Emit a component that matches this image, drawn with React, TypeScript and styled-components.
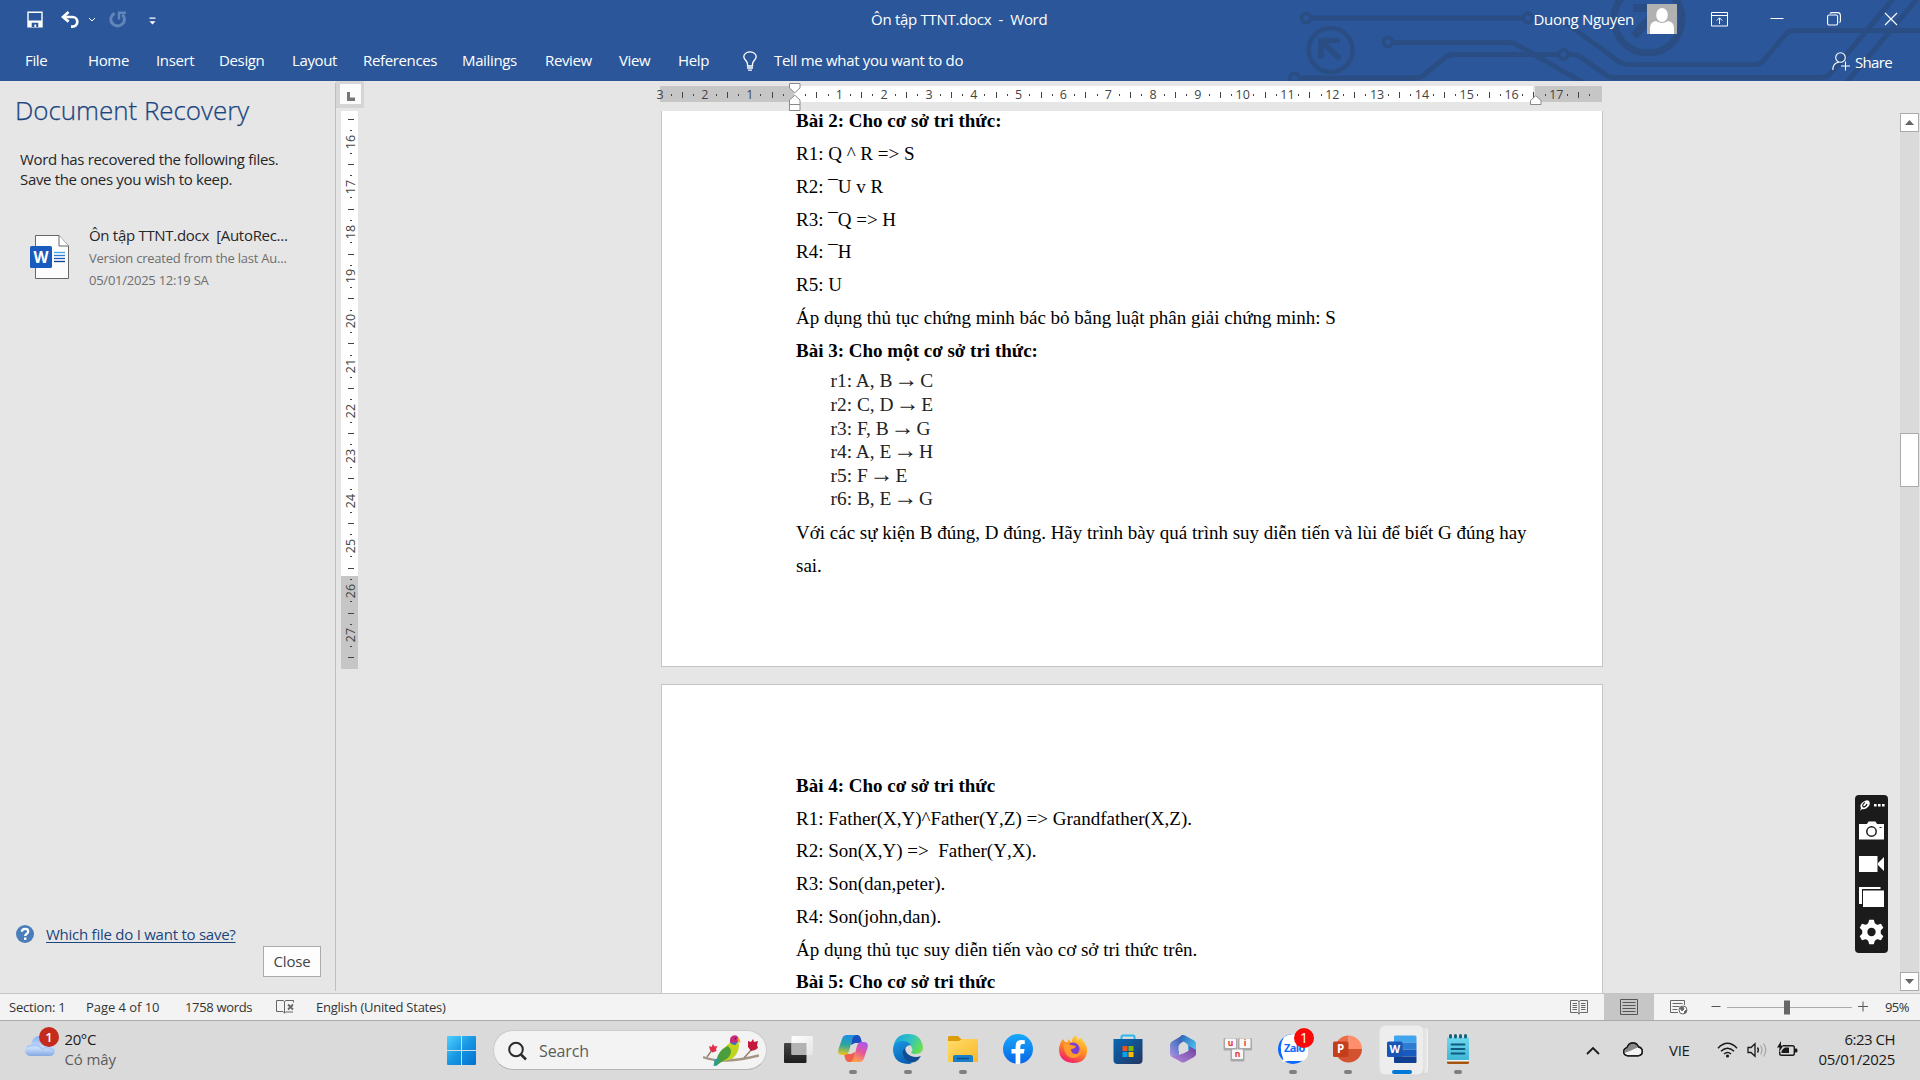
import React from "react";
import styled, { createGlobalStyle, css } from "styled-components";

const ui = `"Open Sans", "Noto Sans", "Liberation Sans", sans-serif`;
const serif = `"Liberation Serif", "DejaVu Serif", serif`;

const GlobalStyle = createGlobalStyle`
  * { box-sizing: border-box; }
  html, body { margin: 0; padding: 0; overflow: hidden; }
  body { font-family: ${ui}; background: #e6e6e6; }
  svg { display: block; flex: none; }
`;

/* ---------- shared ---------- */

const Screen = styled.div`
  width: 1920px;
  height: 1080px;
  display: flex;
  flex-direction: column;
  overflow: hidden;
  position: relative;
`;

const Label = styled.span<{ $size?: number; $ls?: number; $color?: string; $lh?: number; $weight?: number }>`
  font-size: ${(p) => p.$size ?? 15}px;
  letter-spacing: ${(p) => p.$ls ?? -0.3}px;
  line-height: ${(p) => p.$lh ?? 20}px;
  font-weight: ${(p) => p.$weight ?? 400};
  color: ${(p) => p.$color ?? "inherit"};
  white-space: pre;
`;

/* ---------- title bar and ribbon ---------- */

const Header = styled.header`
  height: 81px;
  flex: none;
  background: #2b579a;
  color: #fff;
  position: relative;
`;

const Circuit = styled.svg`
  position: absolute;
  right: 0;
  top: 0;
`;

const TitleBar = styled.div`
  height: 38px;
  display: grid;
  grid-template-columns: 871px 1fr auto;
  align-items: center;
  position: relative;
`;

const QuickAccess = styled.div`
  display: flex;
  align-items: center;
  padding: 1px 0 0 27px;
`;

const WindowControls = styled.div`
  display: flex;
  align-items: center;
  height: 38px;
  padding-right: 22px;
`;

const Gap = styled.div<{ $w: number }>`
  width: ${(p) => p.$w}px;
  flex: none;
`;

const RibbonTabs = styled.nav`
  height: 43px;
  display: flex;
  align-items: center;
  padding: 3px 0 0 25px;
  position: relative;
`;

const Tab = styled.div<{ $w: number; $after?: number }>`
  width: ${(p) => p.$w}px;
  margin-right: ${(p) => p.$after ?? 27}px;
  padding-bottom: 2px;
  flex: none;
  display: flex;
`;

const TellMe = styled.div`
  padding-bottom: 2px;
  display: flex;
`;

const ShareButton = styled.div`
  margin-left: auto;
  padding: 1px 28px 0 0;
  display: flex;
  align-items: center;
  gap: 4px;
`;

/* ---------- body ---------- */

const Body = styled.div`
  height: 912px;
  flex: none;
  display: grid;
  grid-template-columns: 336px 1fr 20px;
  background: #e6e6e6;
`;

const Recovery = styled.aside`
  margin: 2px 0;
  border-right: 1px solid #bfbfbf;
  display: flex;
  flex-direction: column;
  padding: 10px 0 0 15px;
`;

const RecoveryTitle = styled.h1`
  margin: 0;
  font-size: 26px;
  font-weight: 300;
  letter-spacing: -0.05px;
  line-height: 34px;
  color: #1b457f;
  -webkit-text-stroke: 0.25px #1b457f;
  white-space: nowrap;
`;

const RecoveryIntro = styled.p`
  margin: 22px 0 0 5px;
  font-size: 15px;
  letter-spacing: -0.33px;
  line-height: 20px;
  color: #262626;
`;

const FileCard = styled.div`
  margin: 34px 0 0 15px;
  display: flex;
`;

const FileIconSpace = styled.div`
  padding-top: 12px;
`;

const FileText = styled.div`
  display: flex;
  flex-direction: column;
  margin-left: 20px;
`;

const HelpRow = styled.div`
  margin-top: auto;
  padding: 0 0 2px 1px;
  display: flex;
  align-items: center;
  gap: 12px;
`;

const HelpLink = styled.a`
  font-size: 15px;
  line-height: 20px;
  letter-spacing: -0.25px;
  color: #1b457f;
  text-decoration: underline;
  text-underline-offset: 2px;
  white-space: nowrap;
`;

const CloseButton = styled.button`
  align-self: flex-end;
  margin: 0 14px 14px 0;
  width: 58px;
  height: 31px;
  padding: 0 0 2px;
  border: 1px solid #ababab;
  background: #fdfdfd;
  font: 15px/26px ${ui};
  letter-spacing: -0.2px;
  color: #444;
`;

const Workspace = styled.main`
  display: grid;
  grid-template-rows: 30px 1fr;
  min-width: 0;
`;

const RulerRow = styled.div`
  display: flex;
  align-items: flex-start;
`;

const TabSelector = styled.div`
  width: 28px;
  height: 27px;
  background: #d5d5d5;
  padding: 3px 3px 4px 4px;
  display: flex;
`;

const TabSelectorFace = styled.div`
  flex: 1;
  background: #fcfcfc;
  display: flex;
  align-items: flex-end;
  justify-content: center;
  padding-bottom: 3px;
`;

const HRuler = styled.div`
  position: relative;
  margin: 5px 0 0 296px;
  width: 942px;
  height: 16px;
  display: flex;
  background: linear-gradient(90deg, #c6c6c6 0 134px, #fff 134px 873px, #e6e6e6 873px 875px, #c6c6c6 875px);
`;

const HCells = styled.div`
  display: flex;
  align-items: center;
  margin-left: -5.5px;
  padding-top: 2px;
`;

const HCell = styled.div`
  width: 11.2125px;
  flex: none;
  display: flex;
  justify-content: center;
  white-space: nowrap;
  font-size: 12.5px;
  line-height: 16px;
  color: #444;
`;

const HTickWrap = styled.span`
  height: 16px;
  display: flex;
  align-items: center;
`;

const Tick = styled.i<{ $long?: boolean; $vertical?: boolean }>`
  background: #444;
  ${(p) =>
    p.$vertical
      ? css`
          height: 1px;
          width: ${p.$long ? 6 : 2}px;
        `
      : css`
          width: 1px;
          height: ${p.$long ? 6 : 2}px;
        `}
`;

const Marker = styled.svg<{ $x: number; $y: number }>`
  position: absolute;
  left: ${(p) => p.$x}px;
  top: ${(p) => p.$y}px;
`;

const Canvas = styled.div`
  display: flex;
  align-items: flex-start;
  overflow: hidden;
  height: 882px;
`;

const VRuler = styled.div`
  margin-left: 5px;
  width: 17px;
  height: 558px;
  background: linear-gradient(#fff 0 465px, #c6c6c6 465px);
  padding-top: 2.8px;
`;

const VCell = styled.div`
  height: 11.22px;
  display: flex;
  align-items: center;
  justify-content: center;
  padding-left: 3px;
`;

const VNumber = styled.span`
  transform: rotate(-90deg);
  font-size: 12.5px;
  line-height: 11px;
  color: #444;
  padding-bottom: 1px;
`;

const Pages = styled.div`
  margin-left: 303px;
  width: 942px;
  display: flex;
  flex-direction: column;
  gap: 17px;
`;

const Page = styled.article<{ $h: number; $top: number; $continued?: boolean }>`
  height: ${(p) => p.$h}px;
  background: #fff;
  border: 1px solid #c6c6c6;
  border-top-width: ${(p) => (p.$continued ? 0 : 1)}px;
  flex: none;
  overflow: hidden;
  padding: ${(p) => p.$top}px 0 0 134px;
  font-family: ${serif};
  font-kerning: none;
  color: #000;

  ${(p) =>
    p.$continued &&
    css`
      > :first-child {
        height: 27px;
        line-height: 19px;
      }
    `}
`;

const Line = styled.p<{ $bold?: boolean }>`
  margin: 0;
  font-size: 19px;
  line-height: 32.75px;
  height: 32.75px;
  white-space: pre;
  font-weight: ${(p) => (p.$bold ? 700 : 400)};
`;

const RuleList = styled.div`
  padding: 2.2px 0 5.8px 34.5px;
`;

const Rule = styled.p`
  margin: 0;
  font-size: 19.4px;
  line-height: 23.6px;
  height: 23.6px;
  color: #222;
  white-space: pre;
  font-kerning: normal;
`;

const Arrow = styled.span`
  font-size: 24px;
  line-height: 0;
  margin: 0 -3px;
`;

const Scrollbar = styled.div`
  margin: 32px 1px 2px 0;
  background: #dadada;
  display: flex;
  flex-direction: column;
  align-items: stretch;
`;

const ScrollButton = styled.div`
  height: 19px;
  background: #fff;
  border: 1px solid #ababab;
  display: flex;
  align-items: center;
  justify-content: center;
`;

const ScrollThumb = styled.div`
  margin-top: 301px;
  margin-bottom: auto;
  height: 54px;
  background: #fff;
  border: 1px solid #ababab;
`;

/* ---------- floating capture toolbar ---------- */

const CaptureBar = styled.div`
  position: absolute;
  left: 1855px;
  top: 795px;
  width: 33px;
  height: 158px;
  border-radius: 4px;
  background: #1b1b1b;
`;

/* ---------- status bar ---------- */

const StatusBar = styled.footer`
  height: 28px;
  flex: none;
  background: #f3f3f3;
  border-top: 1px solid #c6c6c6;
  border-bottom: 1px solid #ababab;
  display: flex;
  align-items: center;
  padding: 0 11px 0 9px;
  color: #333;
`;

const StatusItem = styled.div<{ $w: number }>`
  width: ${(p) => p.$w}px;
  flex: none;
  display: flex;
  align-items: center;
`;

const StatusRight = styled.div`
  margin-left: auto;
  display: flex;
  align-items: center;
`;

const ViewButton = styled.div<{ $active?: boolean }>`
  width: 50px;
  height: 26px;
  display: flex;
  align-items: center;
  justify-content: center;
  background: ${(p) => (p.$active ? "#c6c6c6" : "transparent")};
`;

/* ---------- taskbar ---------- */

const Taskbar = styled.div`
  height: 59px;
  flex: none;
  background: #dadada;
  display: grid;
  grid-template-columns: 434px 1052px 1fr;
`;

const Weather = styled.div`
  display: flex;
  padding: 6px 0 0 25px;
`;

const WeatherText = styled.div`
  display: flex;
  flex-direction: column;
  margin-left: 2.5px;
  padding-top: 2px;
`;

const Apps = styled.div`
  display: flex;
  align-items: stretch;
`;

const StartSlot = styled.div`
  width: 55px;
  flex: none;
  display: flex;
  justify-content: center;
  padding-top: 15px;
`;

const Slot = styled.div`
  width: 55px;
  flex: none;
  display: flex;
  flex-direction: column;
  align-items: center;
  padding-top: 13px;
`;

const IndicatorSpace = styled.div`
  padding-top: 6px;
  display: flex;
`;

const Indicator = styled.i<{ $active?: boolean }>`
  height: 4px;
  width: ${(p) => (p.$active ? 20 : 8)}px;
  border-radius: 2px;
  background: ${(p) => (p.$active ? "#0078d4" : "#7f7f7f")};
`;

const SearchBox = styled.div`
  margin: 9px 3px 0 4px;
  width: 274px;
  height: 40px;
  border-radius: 20px;
  background: #f3f3f3;
  border: 1px solid #cbcbcb;
  border-bottom-color: #b5b5b5;
  display: flex;
  align-items: center;
  padding: 1px 7px 0 14px;
`;

const ParrotSpace = styled.div`
  margin-left: auto;
`;

const ActiveStack = styled.div`
  width: 48px;
  height: 49px;
  margin: 5px 2px 0 5px;
  border-radius: 6px;
  background: #e6e6e6;
  border: 1px solid #d2d2d2;
  border-right-color: #f2f2f2;
  flex: none;
`;

const ActiveTile = styled.div`
  width: 43px;
  height: 48px;
  margin: -1px 0 0 -1px;
  border-radius: 5px;
  background: #ededed;
  box-shadow: 0 0 0 1px #e2e2e2, 1px 1px 1px #c9c9c9;
  display: flex;
  flex-direction: column;
  align-items: center;
  padding-top: 8px;
`;

const Tray = styled.div`
  display: flex;
  align-items: center;
  padding-left: 100px;
  color: #1a1a1a;
`;

const TrayLang = styled.div`
  width: 22px;
  padding-bottom: 2px;
  display: flex;
`;

const Clock = styled.div`
  margin-left: auto;
  padding-right: 25px;
  padding-bottom: 3px;
  display: flex;
  flex-direction: column;
  align-items: flex-end;
`;

/* ---------- drawings ---------- */

const SaveIcon = () => (
  <svg width="16" height="17" viewBox="0 0 16 17" fill="none">
    <path d="M1 1.2h14v14.6H1z" stroke="#fff" strokeWidth="1.4" />
    <path d="M1 9.5h14V16H1z" fill="#fff" />
    <path d="M4.7 11.8h6.6V16H9.2v-2.4H7.4V16H4.7z" fill="#2b579a" />
  </svg>
);
const UndoIcon = () => (
  <svg width="19" height="17" viewBox="0 0 19 17" fill="none">
    <path d="M2 6h9.5a4.7 4.7 0 0 1 0 9.6H10" stroke="#fff" strokeWidth="2.7" />
    <path d="M7.6 1L2 6l5.6 4.6" stroke="#fff" strokeWidth="2.7" />
  </svg>
);
const RedoIcon = () => (
  <svg width="18" height="17" viewBox="0 0 18 17" fill="none">
    <path d="M5.6 2.4A6.800 6.600 0 1 0 13.400 3.600" stroke="#6386ba" strokeWidth="3" />
    <path d="M10 8.500V1.700H17" stroke="#6386ba" strokeWidth="2.400" />
  </svg>
);

const CircuitArt = () => (
  <Circuit width="640" height="81" viewBox="1280 0 640 81" fill="none" stroke="#2a4d84" strokeWidth="5">
    <circle cx="1306" cy="18" r="4.6" strokeWidth="3.6" />
    <circle cx="1528" cy="18" r="4.6" strokeWidth="3.6" />
    <path d="M1311 18H1523" />
    <path d="M1566 23L1618 61Q1623 64.500 1630 64.500H1754Q1760 64.500 1763 61L1786 34Q1789 30.500 1794 30.500H1920" />
    <circle cx="1330.600" cy="50" r="22" strokeWidth="4.600" />
    <path d="M1340 40.500H1321V59M1321 40.500L1340 59" strokeWidth="5.600" />
    <circle cx="1648" cy="19" r="34" strokeWidth="7" />
    <path d="M1633 8H1658V32M1634 36L1658 10" strokeWidth="8" />
    <circle cx="1388" cy="42" r="4.600" strokeWidth="3.600" />
    <path d="M1393 42.500H1508Q1514 42.500 1519 46L1584 83" />
    <circle cx="1294.500" cy="78" r="4.600" strokeWidth="3.600" />
    <path d="M1299 78H1416Q1420 78 1424 75L1446 57Q1449 54.500 1454 54.500H1558" />
    <circle cx="1563.500" cy="54.500" r="4.600" strokeWidth="3.600" />
    <path d="M1569 54.500Q1577 54 1582 58L1606 75Q1609 77.500 1614 77.500H1822Q1827 77.500 1830 74L1894 -2" />
    <path d="M1846 83L1918 -2" />
  </Circuit>
);

const Avatar = () => (
  <svg width="30" height="30" viewBox="0 0 30 30">
    <rect width="30" height="30" fill="#b1b1b1" />
    <ellipse cx="15" cy="11" rx="5.800" ry="7" fill="#fff" />
    <path d="M3 30v-6q0-6 6-7 6 4 12 0 6 1 6 7v6z" fill="#fff" />
  </svg>
);

const WordFileIcon = () => (
  <svg width="39" height="45" viewBox="0 0 39 45">
    <path d="M5.500 .5H29L38.500 11V43.500H5.500z" fill="#fcfcfc" stroke="#666" />
    <path d="M29 .5V11h9.500" fill="#fff" stroke="#666" />
    <path d="M24 17.500h11" stroke="#41a5ee" strokeWidth="1.300" />
    <path d="M24 20.500h11" stroke="#2b7cd3" strokeWidth="1.300" />
    <path d="M24 23.500h11" stroke="#185abd" strokeWidth="1.300" />
    <path d="M24 26.500h11" stroke="#103f91" strokeWidth="1.300" />
    <rect x="0" y="11" width="22" height="22" rx="1.500" fill="#185abd" />
    <text x="11" y="27.500" textAnchor="middle" fontFamily={ui} fontWeight="700" fontSize="15.500" fill="#fff">W</text>
  </svg>
);

const StartIcon = () => (
  <svg width="29" height="29" viewBox="0 0 29 29">
    <defs>
      <linearGradient id="win" x1="0" y1="0" x2="1" y2="1">
        <stop offset="0" stopColor="#4fd0ff" />
        <stop offset=".5" stopColor="#1796e3" />
        <stop offset="1" stopColor="#0271cf" />
      </linearGradient>
    </defs>
    <path fill="url(#win)" d="M1 0h13v14H0V1a1 1 0 0 1 1-1zM15 0h13a1 1 0 0 1 1 1v13H15zM0 15h14v14H1a1 1 0 0 1-1-1zM15 15h14v13a1 1 0 0 1-1 1H15z" />
  </svg>
);

const Parrot = () => (
  <svg width="56" height="32" viewBox="0 0 56 32" fill="none">
    <path d="M0 22q10 4 24 3.500t32-5" stroke="#a39684" strokeWidth="2.400" />
    <path d="M4 22l5-7M41 23l8-9" stroke="#8f8069" strokeWidth="1.400" />
    <path d="M6 11l2.500 1 1.500-3 1.500 2.500 3-.5-1.500 3 .5 2-4 1.500-2.500-2.500z" fill="#e2304f" />
    <path d="M45 6l3 1 2-3 1 3 4-1-1 4 1 3-3 2-4 1-3-4z" fill="#c4193c" />
    <path d="M28 6q8-1 8 4 0 8-7 14l-8 2-4 0q0-9 5-14 4-3 6-6z" fill="#c3d41d" />
    <path d="M25 11q6 5 0 12l-8 5-4 3q0-9 4-14 3-4 8-6z" fill="#4c9e3d" />
    <path d="M17 22l-3 8.500-3.500.5 1-6z" fill="#2c9c95" />
    <path d="M27 7.500Q26 .5 32 .3q4 .7 4 5.700-4 4-9 1.500z" fill="#c82a7c" />
    <path d="M27 7q4 1.500 8-.5l-2.500 3.500q-4 0-5.500-3z" fill="#3f6fc4" />
    <path d="M34.500 3q3.500 0 2.500 5-3-1-2.500-5z" fill="#f5a623" />
    <circle cx="32.500" cy="3.600" r=".8" fill="#222" />
  </svg>
);

const TaskViewIcon = () => (
  <svg width="30" height="30" viewBox="0 0 30 30">
    <defs>
      <linearGradient id="tvd" x1="0" y1="0" x2="0" y2="1"><stop offset="0" stopColor="#454545" /><stop offset="1" stopColor="#1d1d1d" /></linearGradient>
      <linearGradient id="tvl" x1="0" y1="0" x2="1" y2="1"><stop offset="0" stopColor="#fff" /><stop offset="1" stopColor="#e4e4e4" /></linearGradient>
    </defs>
    <rect x="1" y="9" width="22.500" height="20" rx="1" fill="url(#tvd)" />
    <rect x="8.500" y="2" width="21.500" height="19" rx="1" fill="url(#tvl)" />
    <rect x="8.500" y="9" width="15" height="12" fill="#9d9d9d" opacity=".75" />
  </svg>
);

const CopilotIcon = () => (
  <svg width="30" height="30" viewBox="0 0 30 30">
    <defs>
      <linearGradient id="cp1" x1=".3" y1="0" x2=".2" y2="1"><stop offset="0" stopColor="#1b8fe6" /><stop offset=".5" stopColor="#2fa79b" /><stop offset="1" stopColor="#f3c51b" /></linearGradient>
      <linearGradient id="cp2" x1=".8" y1="0" x2=".4" y2="1"><stop offset="0" stopColor="#a659f3" /><stop offset=".5" stopColor="#e5569a" /><stop offset="1" stopColor="#ffa24b" /></linearGradient>
    </defs>
    <path d="M14 1h5q3 0 4 4l1 4h-7l-4 2z" fill="#1b4fc0" />
    <path d="M16 28h-5q-3 0-4-4l-1-4h7l4-2z" fill="#f0604a" />
    <path d="M9 1h9q-3 1-4 5l-3 11q-1 4-5 4H4q-5 0-3.500-6L4 5q1-4 5-4z" fill="url(#cp1)" />
    <path d="M21 28h-9q3-1 4-5l3-11q1-4 5-4h2q5 0 3.500 6L26 24q-1 4-5 4z" fill="url(#cp2)" />
  </svg>
);

const EdgeIcon = () => (
  <svg width="30" height="30" viewBox="0 0 30 30">
    <defs>
      <linearGradient id="ed1" x1="0" y1=".2" x2="1" y2=".6"><stop offset="0" stopColor="#1ca3dd" /><stop offset=".5" stopColor="#2fc2c6" /><stop offset="1" stopColor="#6bdf4c" /></linearGradient>
      <linearGradient id="ed2" x1="0" y1="0" x2=".5" y2="1"><stop offset="0" stopColor="#199be4" /><stop offset="1" stopColor="#0b5fb4" /></linearGradient>
    </defs>
    <path d="M.5 12Q3 0 15 0q13 0 15 13 0 7-7 7-5 0-5-2 2-1 1-4-2-5-8-5Q4 9 .5 12z" fill="url(#ed1)" />
    <path d="M0 15q1-8 9-8 6 0 9 4-6 0-6 6 0 7 7 12-2 1-4 1Q0 29 0 15z" fill="url(#ed2)" />
    <path d="M12 14q-4 3-1 9 4 7 11 5 4-2 6-6-5 2-10 0-6-3-6-8z" fill="#124c92" />
  </svg>
);

const FolderIcon = () => (
  <svg width="30" height="30" viewBox="0 0 30 30">
    <defs>
      <linearGradient id="fo" x1="0" y1="0" x2="1" y2="1"><stop offset="0" stopColor="#ffdc68" /><stop offset="1" stopColor="#f7b92c" /></linearGradient>
    </defs>
    <path d="M0 3.500Q0 2 1.500 2H10l3 3h16v6H0z" fill="#dd9b0c" />
    <path d="M0 7h11l3-2h16v22q0 1-1 1H1q-1 0-1-1z" fill="url(#fo)" />
    <path d="M5 28v-5q0-2 2-2h16q2 0 2 2v5z" fill="#1a7fc7" />
    <path d="M9 24.500h12" stroke="#0a4f92" strokeWidth="1.500" />
  </svg>
);

const FacebookIcon = () => (
  <svg width="30" height="30" viewBox="0 0 30 30">
    <defs><linearGradient id="fb" x1="0" y1="0" x2="0" y2="1"><stop offset="0" stopColor="#17a9fb" /><stop offset="1" stopColor="#0865e6" /></linearGradient></defs>
    <circle cx="15" cy="15" r="15" fill="url(#fb)" />
    <path d="M12.600 30V19.500H8.500v-4.600h4.100v-3q0-6 6-6l3.200.3v3.900h-2q-2.500 0-2.500 2.400v2.400h4.300l-.8 4.600h-3.500V30z" fill="#fff" />
  </svg>
);

const FirefoxIcon = () => (
  <svg width="30" height="30" viewBox="0 0 30 30">
    <defs>
      <linearGradient id="ff" x1=".8" y1="0" x2=".3" y2="1"><stop offset="0" stopColor="#ffe03c" /><stop offset=".5" stopColor="#ff8b25" /><stop offset="1" stopColor="#f0196c" /></linearGradient>
    </defs>
    <path d="M5 5l2 3 3 0 0-3 4 4q-1-5 4-8l2 6q0-3 3-3 5 6 6 10 1 15-14 15Q1 28 1 15 2 8 5 5z" fill="url(#ff)" />
    <circle cx="15" cy="15" r="6.500" fill="#7a3fd0" />
    <path d="M5 10q5-1 8 1l5 1q-1 3-5 3 0 5 5 5 4 0 5-4 0 8-8 8T5 10z" fill="#ff9a2b" />
  </svg>
);

const StoreIcon = () => (
  <svg width="30" height="30" viewBox="0 0 30 30">
    <defs><linearGradient id="st" x1="0" y1="0" x2="1" y2="1"><stop offset="0" stopColor="#0669b5" /><stop offset="1" stopColor="#233562" /></linearGradient></defs>
    <path d="M8.500 6V3q0-1.500 1.500-1.500h10q1.500 0 1.500 1.500v3" fill="none" stroke="#2bb8f0" strokeWidth="2" />
    <path d="M.5 5h29v21q0 4-4 4h-21q-4 0-4-4z" fill="url(#st)" />
    <path d="M9.500 12h5v5h-5z" fill="#f25022" />
    <path d="M15.500 12h5v5h-5z" fill="#7fba00" />
    <path d="M9.500 18h5v5h-5z" fill="#00a4ef" />
    <path d="M15.500 18h5v5h-5z" fill="#ffb900" />
  </svg>
);

const M365Icon = () => (
  <svg width="30" height="30" viewBox="0 0 30 30">
    <defs>
      <linearGradient id="m1" x1="1" y1="0" x2="0" y2="1"><stop offset="0" stopColor="#2b3f91" /><stop offset=".5" stopColor="#5878c8" /><stop offset="1" stopColor="#b896e6" /></linearGradient>
      <linearGradient id="m2" x1="0" y1="0" x2="1" y2="1"><stop offset="0" stopColor="#2a62b8" /><stop offset="1" stopColor="#55d6fa" /></linearGradient>
      <linearGradient id="m3" x1="0" y1="1" x2="1" y2="0"><stop offset="0" stopColor="#b58be0" /><stop offset="1" stopColor="#6a3e9c" /></linearGradient>
    </defs>
    <path d="M15 1L4 7.500q-2 1-2 3.500v9q0 2 2 3l3 1.500 4-3V12q0-2 2-3l6-4z" fill="url(#m1)" />
    <path d="M13 1.500q2-1 4 0l9 5q2 1 2 3.500v10l-8-4v-4q0-2-2-3l-6-3.500z" fill="url(#m2)" />
    <path d="M28 16v4q0 2-2 3l-9 5q-2 1-4 0l-10-6q5 1 8-1l9-4q2-1 1-5z" fill="url(#m3)" />
    <path d="M15 9.500l4.500 2.600v5L15 19.700l-4.500-2.600v-5z" fill="#dadada" />
  </svg>
);

const Key = ({ x, y, c }: { x: number; y: number; c: string }) => (
  <g transform={`translate(${x} ${y})`}>
    <rect x="0" y="0" width="14" height="12.500" rx="1.500" fill="#a9a9a9" />
    <rect x="1.500" y=".5" width="11" height="9.500" rx="1" fill="#f7f7f7" />
    <text x="7" y="8.200" textAnchor="middle" fontFamily={ui} fontSize="8.500" fontWeight="700" fill="#e8303a">{c}</text>
  </g>
);
const UnikeyIcon = () => (
  <svg width="30" height="30" viewBox="0 0 30 30">
    <Key x={0.5} y={4} c="u" />
    <Key x={15} y={4} c="i" />
    <Key x={7.5} y={15} c="n" />
  </svg>
);

const ZaloIcon = () => (
  <svg width="30" height="30" viewBox="0 0 30 30" overflow="visible">
    <circle cx="15" cy="15" r="15" fill="#0a68ff" />
    <path d="M6 3Q15-3 24 3q6 4 6 12v6q-2 6-8 6H10l-6 1q2-2 1-4Q0 13 6 3z" fill="#fff" />
    <text x="6" y="18" fontFamily={ui} fontSize="11" fontWeight="700" letterSpacing="-.6" fill="#0a68ff">Zalo</text>
    <circle cx="26" cy="4" r="10" fill="#fb0808" />
    <text x="26" y="9" textAnchor="middle" fontFamily={ui} fontSize="14" fill="#fff">1</text>
  </svg>
);

const PowerPointIcon = () => (
  <svg width="30" height="30" viewBox="0 0 30 30">
    <path d="M15.500 1.500A13.500 13.500 0 0 0 2 15h13.500z" fill="#ed6c47" />
    <path d="M15.500 1.500A13.500 13.500 0 0 1 29 15H15.500z" fill="#ff8f6b" />
    <path d="M2 15h27a13.500 13.500 0 0 1-27 0z" fill="#d35230" />
    <rect x="0" y="7.500" width="15.500" height="15.500" rx="1.500" fill="#c43e1c" />
    <text x="7.700" y="19.400" textAnchor="middle" fontFamily={ui} fontWeight="700" fontSize="11.500" fill="#fff">P</text>
  </svg>
);

const WordIcon = () => (
  <svg width="30" height="30" viewBox="0 0 30 30">
    <path d="M8 1.500h20q1.500 0 1.500 1.500v5.500H7V2.500q0-1 1-1z" fill="#41a5ee" />
    <path d="M7 8.500h22.500v7H7z" fill="#2b7cd3" />
    <path d="M7 15.500h22.500v7H7z" fill="#185abd" />
    <path d="M7 22.500h22.500V28q0 1-1 1H8q-1 0-1-1z" fill="#103f91" />
    <rect x="0" y="7.500" width="15.500" height="15.500" rx="1.500" fill="#1a54b4" />
    <text x="7.700" y="19.300" textAnchor="middle" fontFamily={ui} fontWeight="700" fontSize="11" fill="#fff">W</text>
  </svg>
);

const NotepadIcon = () => (
  <svg width="24" height="30" viewBox="0 0 24 30">
    <defs><linearGradient id="np" x1="0" y1="0" x2="0" y2="1"><stop offset="0" stopColor="#6fd8ee" /><stop offset="1" stopColor="#3fb6d6" /></linearGradient></defs>
    <path d="M1 25h22v3.500q0 1.500-1.500 1.500h-19Q1 30 1 28.500z" fill="#a5540e" />
    <path d="M1 24h22v3.500H1z" fill="#eef6f8" />
    <path d="M1 3.500h22V26H1z" fill="url(#np)" />
    <path d="M5.500 10.500h13M5.500 15h13M5.500 19.500h13" stroke="#0d5c80" strokeWidth="1.800" strokeLinecap="round" />
    {[4.5, 9.5, 14.5, 19.5].map((x) => (
      <rect key={x} x={x - 1.5} y="0" width="3" height="4.500" rx="1.500" fill="#135e7c" />
    ))}
  </svg>
);

const CloudIcon = () => (
  <svg width="37" height="38" viewBox="0 0 37 38" overflow="visible">
    <defs><linearGradient id="cl" x1="0" y1="0" x2="0" y2="1"><stop offset="0" stopColor="#8db2ee" /><stop offset=".6" stopColor="#c9ddfb" /><stop offset="1" stopColor="#85a8e2" /></linearGradient></defs>
    <path d="M6 29q-6 0-6-6 0-5 6-5 1-9 9-9t9 8q6 1 6 6 0 6-6 6z" fill="url(#cl)" />
    <path d="M2 20q10-5 15 2 5-3 12 1" stroke="#a9c6f5" strokeWidth="1.500" fill="none" />
    <circle cx="24" cy="10" r="10" fill="#c42b1c" />
    <text x="24" y="15" textAnchor="middle" fontFamily={ui} fontSize="13" fontWeight="600" fill="#fff">1</text>
  </svg>
);

/* ---------- data ---------- */

const tabs: [string, number, number?][] = [
  ["File", 23, 40],
  ["Home", 41],
  ["Insert", 36],
  ["Design", 46],
  ["Layout", 44],
  ["References", 72],
  ["Mailings", 56],
  ["Review", 47],
  ["View", 32],
  ["Help", 32, 32],
];

const pageOne: [string, boolean?][] = [
  ["Bài 2: Cho cơ sở tri thức:", true],
  ["R1: Q ^ R => S"],
  ["R2: ¯U v R"],
  ["R3: ¯Q => H"],
  ["R4: ¯H"],
  ["R5: U"],
  ["Áp dụng thủ tục chứng minh bác bỏ bằng luật phân giải chứng minh: S"],
  ["Bài 3: Cho một cơ sở tri thức:", true],
];

const rules: [string, string][] = [
  ["r1: A, B", "C"],
  ["r2: C, D", "E"],
  ["r3: F, B", "G"],
  ["r4: A, E", "H"],
  ["r5: F", "E"],
  ["r6: B, E", "G"],
];

const pageTwo: [string, boolean?][] = [
  ["Bài 4: Cho cơ sở tri thức", true],
  ["R1: Father(X,Y)^Father(Y,Z) => Grandfather(X,Z)."],
  ["R2: Son(X,Y) =>  Father(Y,X)."],
  ["R3: Son(dan,peter)."],
  ["R4: Son(john,dan)."],
  ["Áp dụng thủ tục suy diễn tiến vào cơ sở tri thức trên."],
  ["Bài 5: Cho cơ sở tri thức", true],
];

const apps: [React.FC, boolean][] = [
  [CopilotIcon, true],
  [EdgeIcon, true],
  [FolderIcon, true],
  [FacebookIcon, false],
  [FirefoxIcon, false],
  [StoreIcon, false],
  [M365Icon, false],
  [UnikeyIcon, false],
  [ZaloIcon, true],
  [PowerPointIcon, true],
];

/* Quarter-centimetre steps: whole numbers are labelled, halves get a long tick. */
const hSteps = Array.from({ length: 84 }, (_, i) => -3 + i / 4);
const vSteps = Array.from({ length: 49 }, (_, i) => 15.5 + i / 4);

const HorizontalRuler = () => (
  <HRuler>
    <HCells>
      {hSteps.map((v) => (
        <HCell key={v}>
          {v === 0 ? null : v % 1 === 0 ? Math.abs(v) : <HTickWrap><Tick $long={Math.abs(v % 1) === 0.5} /></HTickWrap>}
        </HCell>
      ))}
    </HCells>
    <Marker $x={129} $y={-3} width="12" height="28" viewBox="0 0 12 28" fill="#fff" stroke="#8a8a8a">
      <path d="M.5 .5h10.500v4.500L5.800 9.800.5 5z" />
      <path d="M.5 21.500V17L5.800 12.200 11 17v4.500z" />
      <path d="M.5 21.500h10.500v6H.5z" />
    </Marker>
    <Marker $x={869.5} $y={9} width="12" height="11" viewBox="0 0 12 11" fill="#fff" stroke="#8a8a8a">
      <path d="M.5 9.500V5.500L5.800 .7 11 5.500v4z" />
    </Marker>
  </HRuler>
);

export default function App() {
  return (
    <Screen>
      <GlobalStyle />
      <Header>
        <CircuitArt />
        <TitleBar>
          <QuickAccess>
            <SaveIcon />
            <Gap $w={18} />
            <UndoIcon />
            <Gap $w={8} />
            <svg width="8" height="5" viewBox="0 0 8 5" fill="none" stroke="#fff"><path d="M1 1l3 3 3-3" /></svg>
            <Gap $w={13} />
            <RedoIcon />
            <Gap $w={22} />
            <svg width="7" height="11" viewBox="0 0 7 11" fill="#fff"><path d="M.5 3.500h6v1.200h-6zM.5 7.200h6L3.500 10.500z" /></svg>
          </QuickAccess>
          <Label $ls={-0.28}>{"Ôn tập TTNT.docx  -  Word"}</Label>
          <WindowControls>
            <Label $ls={-0.3}>Duong Nguyen</Label>
            <Gap $w={13} />
            <Avatar />
            <Gap $w={34} />
            <svg width="17" height="15" viewBox="0 0 17 15" fill="none" stroke="#fff">
              <path d="M.5 .5h16v13.500H.5zM.5 3.500h16M8.500 12V6M5.800 8.500l2.700-2.700 2.700 2.700" />
            </svg>
            <Gap $w={42} />
            <svg width="14" height="14" viewBox="0 0 14 14" stroke="#fff"><path d="M.5 6.500h13" /></svg>
            <Gap $w={43} />
            <svg width="14" height="14" viewBox="0 0 14 14" fill="none" stroke="#fff" strokeWidth="1.100">
              <rect x=".6" y="3" width="10" height="10" rx="1.500" />
              <path d="M3 1.500Q3.500.6 5 .6h5.500Q13.400.6 13.400 3.500V9q0 1-1 1.600" />
            </svg>
            <Gap $w={43} />
            <svg width="14" height="14" viewBox="0 0 14 14" stroke="#fff" strokeWidth="1.100"><path d="M1 1l12 12M13 1L1 13" /></svg>
          </WindowControls>
        </TitleBar>
        <RibbonTabs>
          {tabs.map(([name, w, after]) => (
            <Tab key={name} $w={w} $after={after}>
              <Label $ls={-0.36}>{name}</Label>
            </Tab>
          ))}
          <svg width="16" height="20" viewBox="0 0 16 20" fill="none" stroke="#fff" strokeWidth="1.300">
            <path d="M5.500 15v-2q0-1.500-1.700-3.500Q1 6.500 2.200 4 4 .8 8 .8T13.800 4q1.200 2.500-1.600 5.500-1.700 2-1.700 3.500v2zM5 17h6M6 19.200h4" />
          </svg>
          <Gap $w={16} />
          <TellMe><Label $ls={-0.3}>Tell me what you want to do</Label></TellMe>
          <ShareButton>
            <svg width="19" height="19" viewBox="0 0 19 19" fill="none" stroke="#fff" strokeWidth="1.100">
              <circle cx="8.500" cy="5.500" r="4.800" />
              <path d="M.8 18q0-7 6-7.800M13.500 9.500v9M9 14h9" />
            </svg>
            <Label $ls={-0.65}>Share</Label>
          </ShareButton>
        </RibbonTabs>
      </Header>

      <Body>
        <Recovery>
          <RecoveryTitle>Document Recovery</RecoveryTitle>
          <RecoveryIntro>
            Word has recovered the following files.
            <br />
            Save the ones you wish to keep.
          </RecoveryIntro>
          <FileCard>
            <FileIconSpace>
              <WordFileIcon />
            </FileIconSpace>
            <FileText>
              <Label $lh={24} $ls={-0.3} $color="#262626">{"Ôn tập TTNT.docx  [AutoRec..."}</Label>
              <Label $size={13} $lh={22} $ls={-0.23} $color="#6e6e6e">Version created from the last Au...</Label>
              <Label $size={13} $lh={22} $ls={-0.25} $color="#6e6e6e">05/01/2025 12:19 SA</Label>
            </FileText>
          </FileCard>
          <HelpRow>
            <svg width="18" height="18" viewBox="0 0 18 18">
              <circle cx="9" cy="9" r="9" fill="#4a7ebb" />
              <path d="M5.800 6.800Q6 3.800 9.200 3.800q3 0 3 2.600 0 1.400-1.500 2.300T9.200 11" fill="none" stroke="#fff" strokeWidth="2.200" />
              <rect x="8" y="12.500" width="2.400" height="2.400" fill="#fff" />
            </svg>
            <HelpLink>Which file do I want to save?</HelpLink>
          </HelpRow>
          <CloseButton>Close</CloseButton>
        </Recovery>

        <Workspace>
          <RulerRow>
            <TabSelector>
              <TabSelectorFace>
                <svg width="9" height="9" viewBox="0 0 9 9"><path d="M1 0h3v5.500h5V9H1z" fill="#777" /></svg>
              </TabSelectorFace>
            </TabSelector>
            <HorizontalRuler />
          </RulerRow>
          <Canvas>
            <VRuler>
              {vSteps.map((v) => (
                <VCell key={v}>
                  {v % 1 === 0 ? <VNumber>{v}</VNumber> : <Tick $vertical $long={v % 1 === 0.5} />}
                </VCell>
              ))}
            </VRuler>
            <Pages>
              <Page $h={556} $top={0} $continued>
                {pageOne.map(([text, bold]) => (
                  <Line key={text} $bold={bold}>{text}</Line>
                ))}
                <RuleList>
                  {rules.map(([from, to]) => (
                    <Rule key={from}>
                      {from} <Arrow>→</Arrow> {to}
                    </Rule>
                  ))}
                </RuleList>
                <Line>Với các sự kiện B đúng, D đúng. Hãy trình bày quá trình suy diễn tiến và lùi để biết G đúng hay</Line>
                <Line>sai.</Line>
              </Page>
              <Page $h={400} $top={84.9}>
                {pageTwo.map(([text, bold]) => (
                  <Line key={text} $bold={bold}>{text}</Line>
                ))}
              </Page>
            </Pages>
          </Canvas>
        </Workspace>

        <Scrollbar>
          <ScrollButton>
            <svg width="9" height="5" viewBox="0 0 9 5"><path d="M0 5L4.500 0 9 5z" fill="#666" /></svg>
          </ScrollButton>
          <ScrollThumb />
          <ScrollButton>
            <svg width="9" height="5" viewBox="0 0 9 5"><path d="M0 0h9L4.500 5z" fill="#666" /></svg>
          </ScrollButton>
        </Scrollbar>
      </Body>

      <StatusBar>
        <StatusItem $w={77}><Label $size={13} $ls={-0.2}>Section: 1</Label></StatusItem>
        <StatusItem $w={99}><Label $size={13} $ls={-0.05}>Page 4 of 10</Label></StatusItem>
        <StatusItem $w={91}><Label $size={13} $ls={-0.33}>1758 words</Label></StatusItem>
        <StatusItem $w={40}>
          <svg width="18" height="16" viewBox="0 0 18 16" fill="none" stroke="#666">
            <path d="M8.500 14.500V2.500L7 1.500H.5v11H7l1.500 1.500 1-1h7.500M8.500 2.500L10 1.500h7.500v2" />
            <path d="M12 5.500l5 5M17 5.500l-5 5" strokeWidth="1.800" />
          </svg>
        </StatusItem>
        <Label $size={13} $ls={-0.24}>English (United States)</Label>
        <StatusRight>
          <ViewButton>
            <svg width="18" height="16" viewBox="0 0 18 16" fill="none" stroke="#666">
              <path d="M9 2.500V15.500M9 2.500L7.500 1.500H.5v12h7L9 14.500l1.500-1h7v-12h-7L9 2.500M2.500 4.500H7M2.500 6.500H7M2.500 8.500H7M2.500 10.500H7M11 4.500h4.500M11 6.500h4.500M11 8.500h4.500M11 10.500h4.500" />
            </svg>
          </ViewButton>
          <ViewButton $active>
            <svg width="18" height="16" viewBox="0 0 18 16" fill="none" stroke="#555">
              <path d="M.5 .5h17v15H.5zM2.500 3.500h13M2.500 6.500h13M2.500 9.500h13M2.500 12.500h13" />
            </svg>
          </ViewButton>
          <ViewButton>
            <svg width="18" height="16" viewBox="0 0 18 16" fill="none" stroke="#666">
              <path d="M14.500 6V1.500H.5v12H8M2.500 4.500h10M2.500 7.500h7M2.500 10.500h5" />
              <circle cx="13" cy="11" r="4" fill="#fff" />
              <path d="M10 9l3-1 1 2-2 2zM14 13l2-2 1 1-2 2z" fill="#666" />
            </svg>
          </ViewButton>
          <Gap $w={7} />
          <svg width="158" height="16" viewBox="0 0 158 16" stroke="#555">
            <path d="M.5 7.500h9M147 7.500h10M152 2.500v10" />
            <path d="M16 8.500h125" stroke="#ababab" />
            <rect x="73" y="1.500" width="6" height="14" fill="#666" stroke="none" />
          </svg>
          <Gap $w={16} />
          <Label $size={13} $ls={-0.5}>95%</Label>
        </StatusRight>
      </StatusBar>

      <Taskbar>
        <Weather>
          <CloudIcon />
          <WeatherText>
            <Label $size={15} $color="#1a1a1a" $ls={-0.4}>20°C</Label>
            <Label $size={15} $color="#5c5c5c" $ls={-0.1}>Có mây</Label>
          </WeatherText>
        </Weather>
        <Apps>
          <StartSlot><StartIcon /></StartSlot>
          <SearchBox>
            <svg width="19" height="20" viewBox="0 0 19 20" fill="none" stroke="#2a2a2a" strokeWidth="2">
              <circle cx="8" cy="8.500" r="6.800" />
              <path d="M13 13.500l5 5" strokeWidth="2.500" />
            </svg>
            <Gap $w={12} />
            <Label $size={16} $ls={-0.1} $color="#5c5c5c">Search</Label>
            <ParrotSpace><Parrot /></ParrotSpace>
          </SearchBox>
          <Slot><TaskViewIcon /></Slot>
          {apps.map(([Icon, running], i) => (
            <Slot key={i}>
              <Icon />
              {running && <IndicatorSpace><Indicator /></IndicatorSpace>}
            </Slot>
          ))}
          <ActiveStack>
            <ActiveTile>
              <WordIcon />
              <IndicatorSpace><Indicator $active /></IndicatorSpace>
            </ActiveTile>
          </ActiveStack>
          <Slot>
            <NotepadIcon />
            <IndicatorSpace><Indicator /></IndicatorSpace>
          </Slot>
        </Apps>
        <Tray>
          <svg width="14" height="10" viewBox="0 0 14 10" fill="none" stroke="#1a1a1a" strokeWidth="1.800"><path d="M1 8l6-6 6 6" /></svg>
          <Gap $w={23} />
          <svg width="20" height="17" viewBox="0 0 20 17" stroke="#1a1a1a" strokeWidth="1.300">
            <path d="M5 13.800Q.7 13.600.7 9.800.7 6.500 4 5.700 5.500 1 10 1q4 0 5.500 4 3.800.6 3.800 4.500 0 4-4.300 4.300z" fill="#f4f4f4" />
            <path d="M1.500 11Q.5 7 4 5.700 5.500 1 10 1q4 0 5.500 4L8 8.500z" fill="#8a8a8a" stroke="none" />
            <path d="M5 13.800Q.7 13.600.7 9.800.7 6.500 4 5.700 5.500 1 10 1q4 0 5.500 4 3.800.6 3.800 4.500 0 4-4.300 4.300z" fill="none" />
          </svg>
          <Gap $w={26} />
          <TrayLang><Label $size={15} $ls={-0.3}>VIE</Label></TrayLang>
          <Gap $w={26} />
          <svg width="21" height="18" viewBox="0 0 21 18" fill="none" stroke="#1a1a1a" strokeWidth="1.500">
            <path d="M1 6.200Q10.500-3.500 20 6.200M4 9.200q6.500-6 13 0M7 12q3.500-3 7 0" />
            <circle cx="10.500" cy="14" r="1.600" fill="#1a1a1a" stroke="none" />
          </svg>
          <Gap $w={9} />
          <svg width="21" height="18" viewBox="0 0 21 18" fill="none" stroke="#1a1a1a" strokeWidth="1.300">
            <path d="M1 5.500h3L8 1.700v12.600L4 10.500H1z" />
            <path d="M10.500 5.500q1.800 2.500 0 5" />
            <path d="M13.500 3.500q3 4.500 0 9M16.500 1.500q4.500 6.500 0 13" stroke="#a8a8a8" />
          </svg>
          <Gap $w={9} />
          <svg width="21" height="19" viewBox="0 0 21 19">
            <path d="M6 4.700h9.500q1.800 0 1.800 1.800v6q0 1.800-1.800 1.800h-11q-1.800 0-1.800-1.800v-2" fill="none" stroke="#1a1a1a" strokeWidth="1.400" />
            <path d="M18 7.500h1.500q1 0 1 2t-1 2H18z" fill="#1a1a1a" />
            <path d="M6 8l2-1.500h4V12H4.500v-2z" fill="#1a1a1a" />
            <path d="M4 0L0 6.500h2.500L2 11l4.500-6.500H4z" fill="#1a1a1a" />
          </svg>
          <Clock>
            <Label $size={15} $ls={-0.5}>6:23 CH</Label>
            <Label $size={15} $ls={-0.3}>05/01/2025</Label>
          </Clock>
        </Tray>
      </Taskbar>

      <CaptureBar>
        <svg width="33" height="158" viewBox="0 0 33 158" fill="#fff">
          <path d="M6 13q-2-3 2-6 4-3 6-1 2 3-1 6t-6 2l-2 2z" />
          <path d="M8 12q-1-3 2-4.500M12 9q-1 3-4 3M14 5l2-1" stroke="#1b1b1b" fill="none" strokeWidth="1.100" />
          <path d="M19 9h2.600v2.400H19zM23 9h2.600v2.400H23zM27 9h2.600v2.400H27z" />
          <path d="M4 29h8l1.500-2.500h7L22 29h7v15.500H4z" />
          <circle cx="16.500" cy="36.500" r="4.700" fill="none" stroke="#1b1b1b" strokeWidth="1.500" />
          <rect x="24.500" y="32" width="2" height="1" fill="#1b1b1b" />
          <path d="M4 61h18.500v16H4zM23 68l6-6v14l-6-6z" />
          <path d="M4 92h21.500v2H7v15H4z" />
          <path d="M8 95.500h21V112H8z" />
          <g transform="translate(16.500 137)">
            {[0, 60, 120, 180, 240, 300].map((a) => (
              <path key={a} d="M-3.500-8L-2.300-12.300h4.600L3.500-8z" transform={`rotate(${a})`} />
            ))}
            <circle r="9.300" />
            <circle r="4.200" fill="#1b1b1b" />
          </g>
        </svg>
      </CaptureBar>
    </Screen>
  );
}
